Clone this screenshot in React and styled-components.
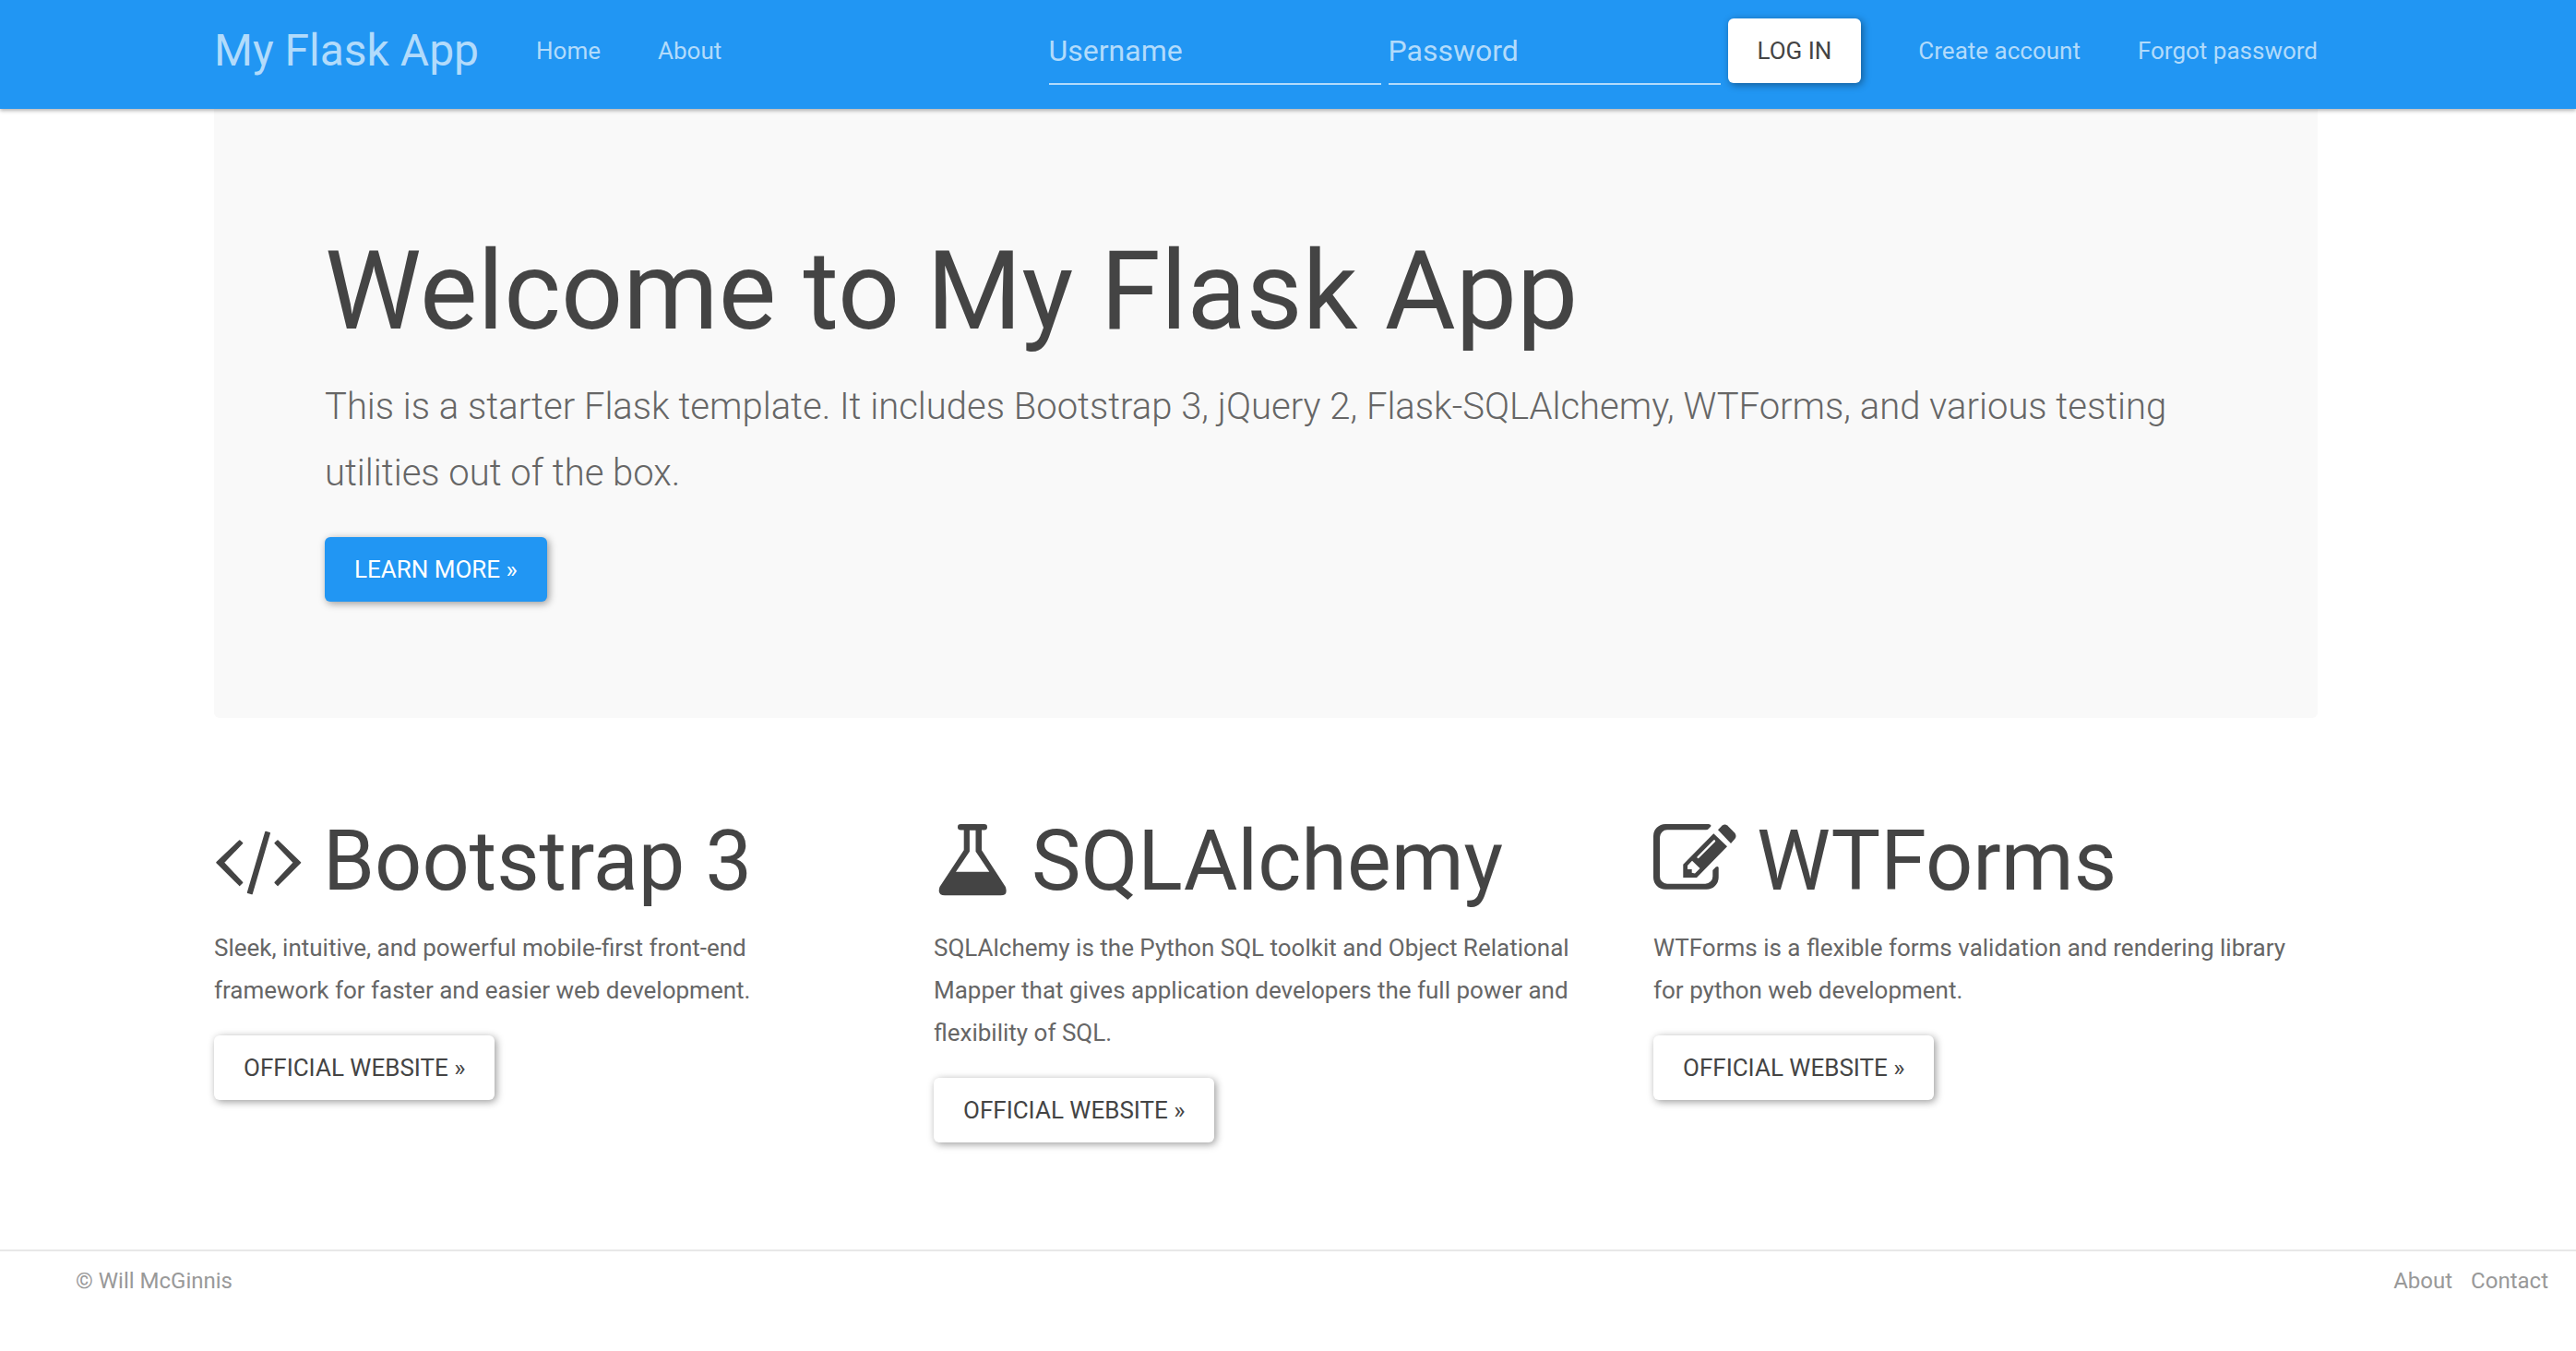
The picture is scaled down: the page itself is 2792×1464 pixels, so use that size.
import React from "react";
import styled, { createGlobalStyle } from "styled-components";

const GlobalStyle = createGlobalStyle`
  *, *::before, *::after { box-sizing: border-box; }
  body {
    margin: 0;
    background: #fff;
    color: #666;
    font-family: Roboto, "Liberation Sans", sans-serif;
    font-size: 26px;
    line-height: 46px;
    -webkit-font-smoothing: antialiased;
  }
`;

const Container = styled.div`
  max-width: 2340px;
  margin: 0 auto;
  padding: 0 30px;
`;

const Navbar = styled.header`
  position: relative;
  padding-right: 48px;
  background: #2196f3;
  box-shadow: 0 2px 4px rgba(0, 0, 0, 0.3);
`;

const NavRow = styled(Container)`
  display: flex;
  align-items: center;
  gap: 62px;
  height: 118px;
  padding-bottom: 8px;
`;

const Brand = styled.a`
  color: #b2dbfb;
  font-size: 48px;
  text-decoration: none;
  white-space: nowrap;
`;

const NavLink = styled.a`
  color: #b2dbfb;
  text-decoration: none;
  white-space: nowrap;
`;

const LoginForm = styled.form`
  display: flex;
  gap: 8px;
  margin-left: auto;
  padding-top: 2px;
`;

const Field = styled.input`
  width: 360px;
  height: 72px;
  padding: 0 0 2px;
  border: 0;
  border-radius: 0;
  outline: 0;
  background: transparent;
  box-shadow: inset 0 -2px 0 #b2dbfb;
  color: #fff;
  font: inherit;
  font-size: 32px;
  &::placeholder { color: #b2dbfb; opacity: 1; }
`;

const buttonLook = ({ $primary }) => `
  display: inline-block;
  height: 70px;
  padding: 0 32px;
  border: 0;
  border-radius: 6px;
  background: ${$primary ? "#2196f3" : "#fff"};
  box-shadow: 2px 2px 8px rgba(0, 0, 0, 0.4);
  color: ${$primary ? "#fff" : "#444"};
  font: inherit;
  line-height: 70px;
  text-decoration: none;
  text-transform: uppercase;
  white-space: nowrap;
  cursor: pointer;
`;

const Button = styled.button`${buttonLook}`;
const ButtonLink = styled.a`${buttonLook}`;

const Main = styled.main`
  padding-right: 48px;
`;

const Jumbotron = styled.section`
  padding: 133px 120px 126px;
  border-radius: 0 0 6px 6px;
  background: #f9f9f9;
`;

const Title = styled.h1`
  margin: 0 0 24px;
  color: #444;
  font-size: 118px;
  font-weight: 400;
  line-height: 130px;
`;

const Lead = styled.p`
  margin: 0 0 33px;
  font-size: 40px;
  font-weight: 300;
  line-height: 72px;
`;

const Features = styled.div`
  display: grid;
  grid-template-columns: repeat(3, 1fr);
  gap: 60px;
  padding: 106px 0 116px;
`;

const Feature = styled.article`
  padding-right: 20px;
`;

const FeatureTitle = styled.h2`
  display: flex;
  gap: 20px;
  margin: 0 0 21px;
  color: #444;
  font-size: 90px;
  font-weight: 400;
  line-height: 99px;
  white-space: nowrap;
`;

const FeatureText = styled.p`
  margin: 0 0 26px;
`;

const Icon = styled.svg`
  flex: none;
  width: ${({ $width }) => $width}px;
  height: 99px;
  fill: currentColor;
`;

const Footer = styled.footer`
  display: flex;
  justify-content: space-between;
  padding: 9px 30px 11px 82px;
  border-top: 2px solid #e8e8e8;
  color: #999;
  font-size: 24px;
`;

const FooterNav = styled.nav`
  display: flex;
  gap: 20px;
`;

const FooterLink = styled.a`
  color: inherit;
  text-decoration: none;
`;

const CodeIcon = () => (
  <Icon $width={98} viewBox="0 0 98 99" aria-hidden="true">
    <g stroke="currentColor" strokeWidth="1.6" strokeLinejoin="round">
      <path d="M3 50.7 27.7 27l2.8 2.7-20.2 21 20.2 21.7-2.8 2.9z" />
      <path d="M93.5 50.7 69 27l-2.8 2.7 20.2 21-20.2 21.7 2.8 2.9z" />
      <path d="M56 17.5 60.2 18.8 41 84.5 36.6 83.3z" />
    </g>
  </Icon>
);

const FlaskIcon = () => (
  <Icon $width={86} viewBox="5 0 86 99" aria-hidden="true">
    <rect x="31" y="9" width="32" height="6.4" rx="3.2" />
    <path
      fillRule="evenodd"
      d="M37.7 14v23.3L11.5 77Q8.4 86.3 17 86.3H77.5Q86 86.3 82.8 77L57 37.3V14zM43.9 15.4h6.6v23.3L65.3 60.7H29L43.9 38.7z"
    />
  </Icon>
);

const EditIcon = () => (
  <Icon $width={92} viewBox="0 0 92 99" aria-hidden="true">
    <path d="M60 9H13A13 13 0 0 0 0 22v44.7a13 13 0 0 0 13 13h44.7a13 13 0 0 0 13-13V56q-1-1.8-3-.5L64.3 59v6.7a8 8 0 0 1-8 8H15a8 8 0 0 1-8-8V23.3a8 8 0 0 1 8-8h42q2 0 3-1.3l2.3-2.4q.8-1.8-2.3-2.6z" />
    <path
      fillRule="evenodd"
      d="M65.3 19.3 80 33.3 47 67H32.3V52.7zM37 54 42 48.8 50.5 57 45 62.5 41.7 61.8V58H37z"
    />
    <path d="M48.5 45 66 27.3" stroke="#fff" strokeWidth="2.4" strokeLinecap="round" />
    <path d="M70 15.3 74.7 10.6Q77.4 8.4 80.2 10.6L88.4 18.7Q90.6 22 88.4 25L84 30z" />
  </Icon>
);

const features = [
  {
    name: "Bootstrap 3",
    Glyph: CodeIcon,
    text: "Sleek, intuitive, and powerful mobile-first front-end framework for faster and easier web development.",
  },
  {
    name: "SQLAlchemy",
    Glyph: FlaskIcon,
    text: "SQLAlchemy is the Python SQL toolkit and Object Relational Mapper that gives application developers the full power and flexibility of SQL.",
  },
  {
    name: "WTForms",
    Glyph: EditIcon,
    text: "WTForms is a flexible forms validation and rendering library for python web development.",
  },
];

export default function App() {
  return (
    <>
      <GlobalStyle />
      <Navbar>
        <NavRow as="nav">
          <Brand href="#">My Flask App</Brand>
          <NavLink href="#">Home</NavLink>
          <NavLink href="#">About</NavLink>
          <LoginForm onSubmit={(event) => event.preventDefault()}>
            <Field type="text" name="username" placeholder="Username" aria-label="Username" />
            <Field type="password" name="password" placeholder="Password" aria-label="Password" />
            <Button type="submit">Log in</Button>
          </LoginForm>
          <NavLink href="#">Create account</NavLink>
          <NavLink href="#">Forgot password</NavLink>
        </NavRow>
      </Navbar>
      <Main>
        <Container>
          <Jumbotron>
            <Title>Welcome to My Flask App</Title>
            <Lead>
              This is a starter Flask template. It includes Bootstrap 3, jQuery 2, Flask-SQLAlchemy, WTForms, and
              various testing utilities out of the box.
            </Lead>
            <ButtonLink $primary href="#">Learn more »</ButtonLink>
          </Jumbotron>
          <Features>
            {features.map(({ name, Glyph, text }) => (
              <Feature key={name}>
                <FeatureTitle>
                  <Glyph />
                  {name}
                </FeatureTitle>
                <FeatureText>{text}</FeatureText>
                <ButtonLink href="#">Official website »</ButtonLink>
              </Feature>
            ))}
          </Features>
        </Container>
      </Main>
      <Footer>
        <span>© Will McGinnis</span>
        <FooterNav>
          <FooterLink href="#">About</FooterLink>
          <FooterLink href="#">Contact</FooterLink>
        </FooterNav>
      </Footer>
    </>
  );
}
